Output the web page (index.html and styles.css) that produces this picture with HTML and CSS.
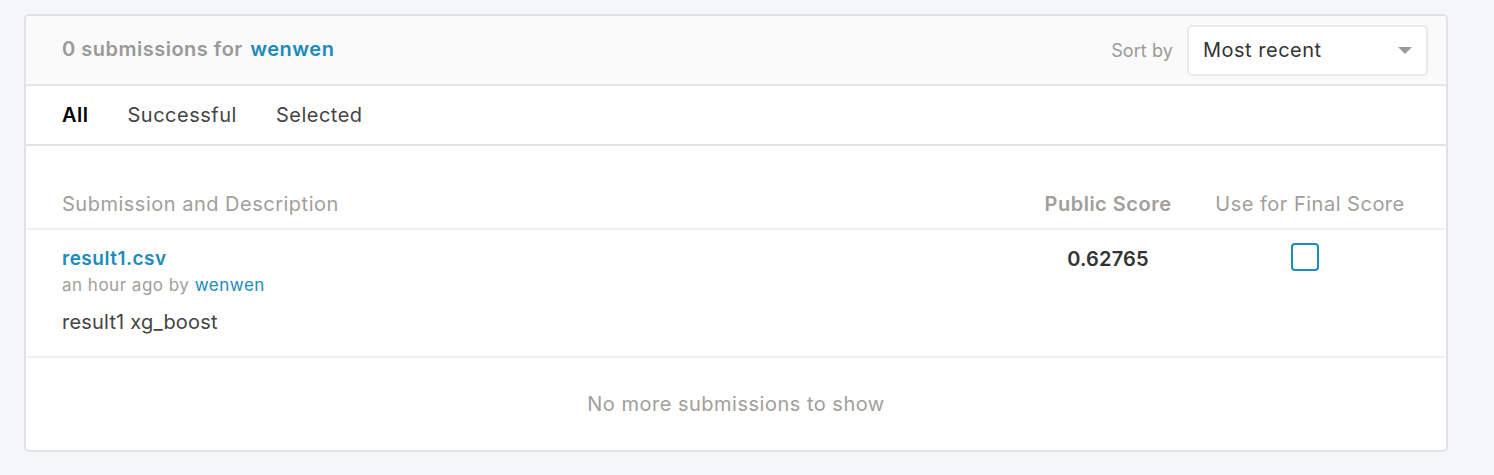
FILE: index.html
```html
<!DOCTYPE html>
<html>
<head>
<meta charset="utf-8">
<link rel="stylesheet" href="styles.css">
</head>
<body>
<div class="card">
  <div class="card-header">
    <div class="title">0 submissions for <a class="user" href="#">wenwen</a></div>
    <div class="sort">
      <span class="sort-label">Sort by</span>
      <div class="select">
        <span>Most recent</span>
        <span class="caret"></span>
      </div>
    </div>
  </div>
  <div class="tabs">
    <span class="tab active">All</span>
    <span class="tab">Successful</span>
    <span class="tab">Selected</span>
  </div>
  <div class="thead">
    <div class="col-desc">Submission and Description</div>
    <div class="col-score bold">Public Score</div>
    <div class="col-final">Use for Final Score</div>
  </div>
  <div class="trow">
    <div class="col-desc">
      <a class="file" href="#">result1.csv</a>
      <div class="meta">an hour ago by <a class="user-link" href="#">wenwen</a></div>
      <div class="desc">result1 xg_boost</div>
    </div>
    <div class="col-score value">0.62765</div>
    <div class="col-final"><span class="checkbox"></span></div>
  </div>
  <div class="footer">No more submissions to show</div>
</div>
</body>
</html>
```

FILE: styles.css
```css
html, body {
  margin: 0;
  padding: 0;
  background: #f4f7f8;
  font-family: "Inter", "Liberation Sans", Arial, sans-serif;
  letter-spacing: 0.5px;
}
body {
  padding: 14px 0 0 24px;
}
a { text-decoration: none; }
.card {
  width: 1420px;
  background: #fff;
  border: 2px solid #e1e2e3;
  border-radius: 5px;
  overflow: hidden;
}
.card-header {
  height: 68px;
  background: #fafafa;
  border-bottom: 2px solid #e6e6e6;
  display: flex;
  align-items: center;
  justify-content: space-between;
  padding: 0 18px 0 36px;
}
.title {
  font-size: 20px;
  font-weight: 600;
  color: #999;
  margin-top: -3px;
}
.user { color: #1a8bbb; margin-left: 2px; }
.sort {
  display: flex;
  align-items: center;
  gap: 14px;
}
.sort-label {
  font-size: 18px;
  color: #999;
  letter-spacing: 0.1px;
}
.select {
  width: 209px;
  height: 47px;
  border: 2px solid #eaeaea;
  border-radius: 5px;
  background: #fff;
  display: flex;
  align-items: center;
  justify-content: space-between;
  padding: 0 14px 0 14px;
  font-size: 20px;
  color: #333;
}
.caret {
  width: 0;
  height: 0;
  border-left: 7px solid transparent;
  border-right: 7px solid transparent;
  border-top: 7px solid #9a9a9a;
}
.tabs {
  height: 58px;
  border-bottom: 2px solid #e2e2e2;
  display: flex;
  align-items: center;
  gap: 39px;
  padding-left: 36px;
  font-size: 20px;
  color: #444;
}
.tab.active { color: #000; font-weight: 600; }
.thead, .trow {
  display: grid;
  grid-template-columns: 1fr 160px 220px;
  gap: 12px;
  padding: 0 26px 0 36px;
}
.thead {
  height: 82px;
  align-items: end;
  border-bottom: 2px solid #f0f0f0;
  font-size: 20px;
  color: #a29e9b;
}
.thead > div { padding-bottom: 12px; }
.thead .bold { font-weight: 600; }
.col-score, .col-final { text-align: center; }
.trow {
  height: 128px;
  border-bottom: 2px solid #f0f0f0;
  padding-top: 17px;
  box-sizing: border-box;
}
.file {
  display: block;
  font-size: 19px;
  font-weight: 600;
  color: #1a8bbb;
}
.meta {
  margin-top: 5px;
  font-size: 17px;
  color: #a29e9b;
}
.user-link { color: #1a8bbb; }
.desc {
  margin-top: 15px;
  font-size: 20px;
  letter-spacing: 0.2px;
  color: #444;
}
.value {
  font-size: 20px;
  font-weight: 600;
  letter-spacing: 0.2px;
  color: #333;
}
.checkbox {
  display: inline-block;
  width: 24px;
  height: 24px;
  border: 2px solid #1a8bbb;
  border-radius: 4px;
  margin-top: -4px;
  margin-left: -10px;
}
.footer {
  height: 92px;
  display: flex;
  align-items: center;
  justify-content: center;
  font-size: 20px;
  color: #a29e9b;
}
```
